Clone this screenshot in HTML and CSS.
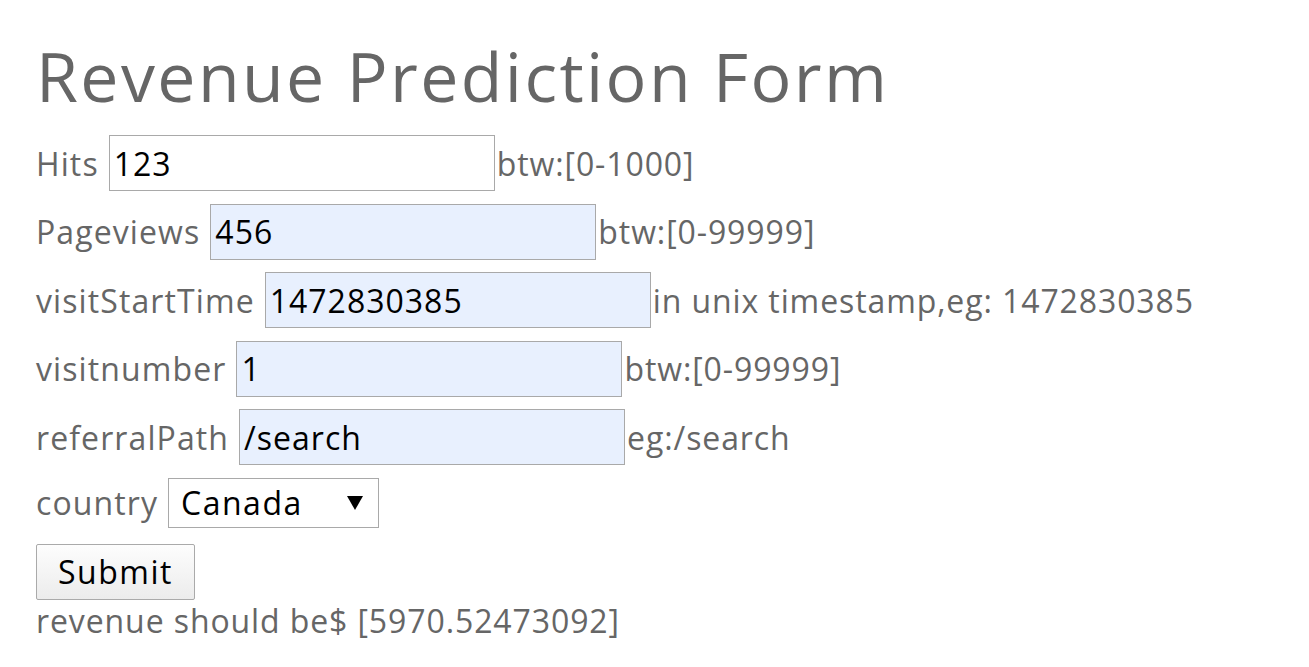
FILE: index.html
```html
<!DOCTYPE html>
<html>
<head>
<meta charset="utf-8">
<link rel="stylesheet" href="styles.css">
</head>
<body>
<div class="page">
  <h1 class="title">Revenue Prediction Form</h1>
  <form class="form">
    <div class="row"><label class="label">Hits</label><input class="field" type="text" value="123"><span class="hint">btw:[0-1000]</span></div>
    <div class="row"><label class="label">Pageviews</label><input class="field filled" type="text" value="456"><span class="hint">btw:[0-99999]</span></div>
    <div class="row"><label class="label">visitStartTime</label><input class="field filled" type="text" value="1472830385"><span class="hint">in unix timestamp,eg: 1472830385</span></div>
    <div class="row"><label class="label">visitnumber</label><input class="field filled" type="text" value="1"><span class="hint">btw:[0-99999]</span></div>
    <div class="row"><label class="label">referralPath</label><input class="field filled" type="text" value="/search"><span class="hint">eg:/search</span></div>
    <div class="row row-select"><label class="label">country</label><span class="select-wrap"><select class="select"><option>Canada</option></select><svg class="arrow" width="16" height="14" viewBox="0 0 16 14"><polygon points="0,0 16,0 8,14" fill="#000"/></svg></span></div>
    <div class="row-button"><button class="submit" type="button">Submit</button></div>
  </form>
  <div class="result">revenue should be$ [5970.52473092]</div>
</div>
</body>
</html>
```
FILE: styles.css
```css
html, body {
  margin: 0;
  padding: 0;
  background: #ffffff;
}
.page {
  padding: 0 36px;
  font-family: "Open Sans", "Liberation Sans", sans-serif;
  color: #666666;
  font-size: 32px;
  letter-spacing: 0.9px;
}
.title {
  margin: 0;
  padding-top: 36px;
  font-size: 68px;
  font-weight: 400;
  line-height: 80px;
  color: #666666;
  letter-spacing: 2.4px;
}
.form {
  margin: 0;
  padding-top: 19px;
}
.row {
  display: flex;
  align-items: center;
  height: 56px;
  margin-bottom: 12.5px;
}
.label {
  margin-right: 10px;
  letter-spacing: 1.1px;
}
.field {
  box-sizing: border-box;
  width: 386px;
  height: 56px;
  margin: 0 2px 0 0;
  padding: 0 4px;
  border: 1px solid #a9a9a9;
  background: #ffffff;
  font-family: "Open Sans", "Liberation Sans", sans-serif;
  font-size: 32px;
  letter-spacing: 1px;
  color: #000000;
  outline: none;
}
.field.filled {
  background: #e8f0fe;
}
.row-select {
  height: 50px;
  margin-bottom: 16px;
}
.select-wrap {
  position: relative;
  display: inline-block;
  height: 50px;
}
.select {
  -webkit-appearance: none;
  appearance: none;
  box-sizing: border-box;
  width: 211px;
  height: 50px;
  padding: 0 12px;
  border: 1px solid #a9a9a9;
  background: #ffffff;
  font-family: "Open Sans", "Liberation Sans", sans-serif;
  font-size: 32px;
  color: #000000;
  letter-spacing: 1.5px;
  outline: none;
}
.arrow {
  position: absolute;
  right: 16px;
  top: 18px;
  pointer-events: none;
}
.row-button {
  height: 56px;
}
.submit {
  box-sizing: border-box;
  width: 159px;
  height: 56px;
  border: 1px solid #aaaaaa;
  border-radius: 2px;
  background: linear-gradient(#fdfdfd, #ececec);
  font-family: "Open Sans", "Liberation Sans", sans-serif;
  font-size: 32px;
  color: #000000;
  letter-spacing: 1.5px;
  padding: 0;
}
.result {
  line-height: 42px;
}
```
